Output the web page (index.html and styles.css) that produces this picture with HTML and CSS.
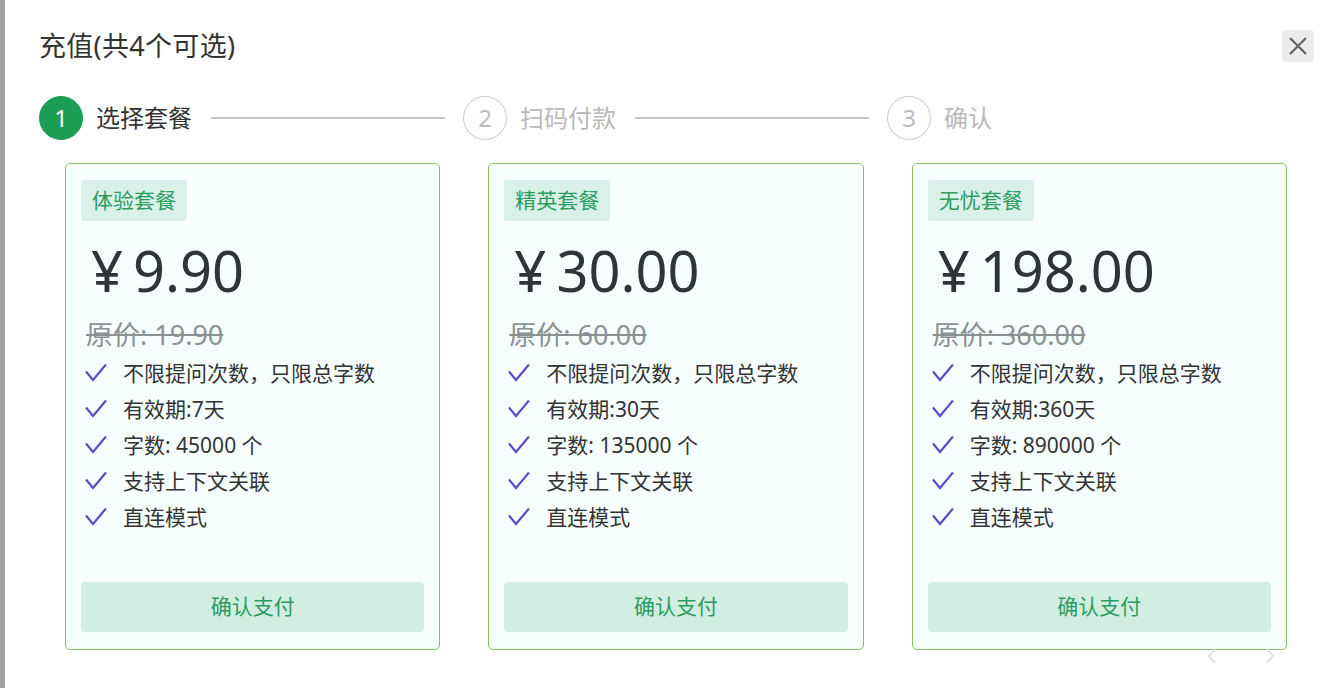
FILE: index.html
```html
<!DOCTYPE html>
<html lang="zh-CN">
<head>
<meta charset="utf-8">
<title>充值</title>
<link rel="stylesheet" href="styles.css">
</head>
<body>
<div class="backdrop-strip"></div>
<div class="dialog">
  <div class="dialog-header">
    <div class="dialog-title">充值(共4个可选)</div>
    <button class="close-btn" aria-label="关闭">
      <svg width="20" height="20" viewBox="0 0 20 20"><path d="M2 2L18 18M18 2L2 18" stroke="#5f5f5f" stroke-width="2" fill="none"/></svg>
    </button>
  </div>

  <div class="steps">
    <div class="step active">
      <span class="step-num">1</span>
      <span class="step-label">选择套餐</span>
      <span class="step-line"></span>
    </div>
    <div class="step">
      <span class="step-num">2</span>
      <span class="step-label">扫码付款</span>
      <span class="step-line"></span>
    </div>
    <div class="step">
      <span class="step-num">3</span>
      <span class="step-label">确认</span>
    </div>
  </div>

  <div class="cards">
    <div class="card">
      <div class="tag">体验套餐</div>
      <div class="price"><span class="yen">¥</span>9.90</div>
      <div class="orig">原价: 19.90</div>
      <ul class="features">
        <li><svg class="check" viewBox="0 0 22 19"><path d="M1 8.5L8 17L21 1.5" stroke="#5a4ccc" stroke-width="2.2" fill="none"/></svg>不限提问次数，只限总字数</li>
        <li><svg class="check" viewBox="0 0 22 19"><path d="M1 8.5L8 17L21 1.5" stroke="#5a4ccc" stroke-width="2.2" fill="none"/></svg>有效期:7天</li>
        <li><svg class="check" viewBox="0 0 22 19"><path d="M1 8.5L8 17L21 1.5" stroke="#5a4ccc" stroke-width="2.2" fill="none"/></svg>字数: 45000 个</li>
        <li><svg class="check" viewBox="0 0 22 19"><path d="M1 8.5L8 17L21 1.5" stroke="#5a4ccc" stroke-width="2.2" fill="none"/></svg>支持上下文关联</li>
        <li><svg class="check" viewBox="0 0 22 19"><path d="M1 8.5L8 17L21 1.5" stroke="#5a4ccc" stroke-width="2.2" fill="none"/></svg>直连模式</li>
      </ul>
      <button class="pay-btn">确认支付</button>
    </div>

    <div class="card">
      <div class="tag">精英套餐</div>
      <div class="price"><span class="yen">¥</span>30.00</div>
      <div class="orig">原价: 60.00</div>
      <ul class="features">
        <li><svg class="check" viewBox="0 0 22 19"><path d="M1 8.5L8 17L21 1.5" stroke="#5a4ccc" stroke-width="2.2" fill="none"/></svg>不限提问次数，只限总字数</li>
        <li><svg class="check" viewBox="0 0 22 19"><path d="M1 8.5L8 17L21 1.5" stroke="#5a4ccc" stroke-width="2.2" fill="none"/></svg>有效期:30天</li>
        <li><svg class="check" viewBox="0 0 22 19"><path d="M1 8.5L8 17L21 1.5" stroke="#5a4ccc" stroke-width="2.2" fill="none"/></svg>字数: 135000 个</li>
        <li><svg class="check" viewBox="0 0 22 19"><path d="M1 8.5L8 17L21 1.5" stroke="#5a4ccc" stroke-width="2.2" fill="none"/></svg>支持上下文关联</li>
        <li><svg class="check" viewBox="0 0 22 19"><path d="M1 8.5L8 17L21 1.5" stroke="#5a4ccc" stroke-width="2.2" fill="none"/></svg>直连模式</li>
      </ul>
      <button class="pay-btn">确认支付</button>
    </div>

    <div class="card">
      <div class="tag">无忧套餐</div>
      <div class="price"><span class="yen">¥</span>198.00</div>
      <div class="orig">原价: 360.00</div>
      <ul class="features">
        <li><svg class="check" viewBox="0 0 22 19"><path d="M1 8.5L8 17L21 1.5" stroke="#5a4ccc" stroke-width="2.2" fill="none"/></svg>不限提问次数，只限总字数</li>
        <li><svg class="check" viewBox="0 0 22 19"><path d="M1 8.5L8 17L21 1.5" stroke="#5a4ccc" stroke-width="2.2" fill="none"/></svg>有效期:360天</li>
        <li><svg class="check" viewBox="0 0 22 19"><path d="M1 8.5L8 17L21 1.5" stroke="#5a4ccc" stroke-width="2.2" fill="none"/></svg>字数: 890000 个</li>
        <li><svg class="check" viewBox="0 0 22 19"><path d="M1 8.5L8 17L21 1.5" stroke="#5a4ccc" stroke-width="2.2" fill="none"/></svg>支持上下文关联</li>
        <li><svg class="check" viewBox="0 0 22 19"><path d="M1 8.5L8 17L21 1.5" stroke="#5a4ccc" stroke-width="2.2" fill="none"/></svg>直连模式</li>
      </ul>
      <button class="pay-btn">确认支付</button>
    </div>
  </div>

  <div class="carousel-arrows">
    <svg width="10" height="16" viewBox="0 0 10 16"><path d="M8 1L2 8L8 15" stroke="#e3e3e3" stroke-width="2" fill="none"/></svg>
    <svg width="10" height="16" viewBox="0 0 10 16"><path d="M2 1L8 8L2 15" stroke="#e3e3e3" stroke-width="2" fill="none"/></svg>
  </div>
</div>
</body>
</html>
```

FILE: styles.css
```css
* {
  box-sizing: border-box;
}

html, body {
  margin: 0;
  padding: 0;
  height: 688px;
  overflow: hidden;
}

body {
  display: flex;
  font-family: "Noto Sans", "Noto Sans CJK SC", sans-serif;
  color: #333;
  background: #fff;
}

.backdrop-strip {
  width: 5px;
  flex: none;
  background: #a3a3a3;
}

.dialog {
  position: relative;
  flex: 1;
  background: #fff;
  padding: 28px 29px 0 34px;
}

.dialog-header {
  display: flex;
  justify-content: space-between;
  align-items: center;
  height: 36px;
}

.dialog-title {
  font-size: 27px;
  line-height: 36px;
  color: #333;
  letter-spacing: 0.3px;
}

.close-btn {
  width: 32px;
  height: 32px;
  margin-right: -3px;
  border: none;
  border-radius: 4px;
  background: #ebebeb;
  display: flex;
  align-items: center;
  justify-content: center;
  padding: 0;
}

.steps {
  display: flex;
  margin-top: 32px;
}

.step {
  flex: 1;
  display: flex;
  align-items: center;
}

.step-num {
  flex: none;
  width: 44px;
  height: 44px;
  border-radius: 50%;
  border: 1px solid #c9c9c9;
  color: #bdbdbd;
  display: flex;
  align-items: center;
  justify-content: center;
  font-size: 24px;
  line-height: 1;
}

.step.active .step-num {
  background: #1c9d55;
  border-color: #1c9d55;
  color: #fff;
}

.step-label {
  margin-left: 13px;
  font-size: 24px;
  line-height: 32px;
  color: #b9b9b9;
}

.step.active .step-label {
  color: #333;
}

.step-line {
  flex: 1;
  height: 2px;
  background: #c6c6c6;
  margin: 0 18px 0 19px;
}

.cards {
  display: flex;
  gap: 48px;
  margin-top: 23px;
  margin-left: 26px;
  width: 1222px;
}

.card {
  flex: 1;
  height: 487px;
  border: 1px solid #86c25a;
  border-radius: 5px;
  background: #f6fefe;
  padding: 16px 15px 17px;
  display: flex;
  flex-direction: column;
  align-items: flex-start;
}

.tag {
  height: 41px;
  line-height: 41px;
  padding: 0 11px;
  border-radius: 3px;
  background: #d9f1e9;
  color: #2b9c5f;
  font-size: 21px;
}

.price {
  margin-top: 21px;
  margin-left: 10px;
  font-size: 56px;
  line-height: 57px;
  height: 57px;
  color: #2f3537;
  white-space: nowrap;
}

.yen {
  margin-right: 10px;
}

.orig {
  margin-top: 18px;
  margin-left: 5px;
  font-size: 27px;
  line-height: 36px;
  height: 36px;
  color: #8a9192;
  text-decoration: line-through;
  text-decoration-thickness: 2px;
}

.features {
  list-style: none;
  margin: 1px 0 0 0;
  padding: 0;
}

.features li {
  display: flex;
  align-items: center;
  height: 36px;
  font-size: 21px;
  color: #333;
  white-space: nowrap;
}

.check {
  width: 22px;
  height: 19px;
  margin-left: 4px;
  margin-right: 16px;
  flex: none;
}

.pay-btn {
  margin-top: auto;
  width: 100%;
  height: 50px;
  border: none;
  border-radius: 4px;
  background: #d2eee2;
  color: #2b9c5f;
  font-family: inherit;
  font-size: 21px;
  line-height: 46px;
  padding: 0 0 2px;
}

.carousel-arrows {
  position: absolute;
  left: 1202px;
  top: 648px;
  width: 68px;
  display: flex;
  justify-content: space-between;
}
```
